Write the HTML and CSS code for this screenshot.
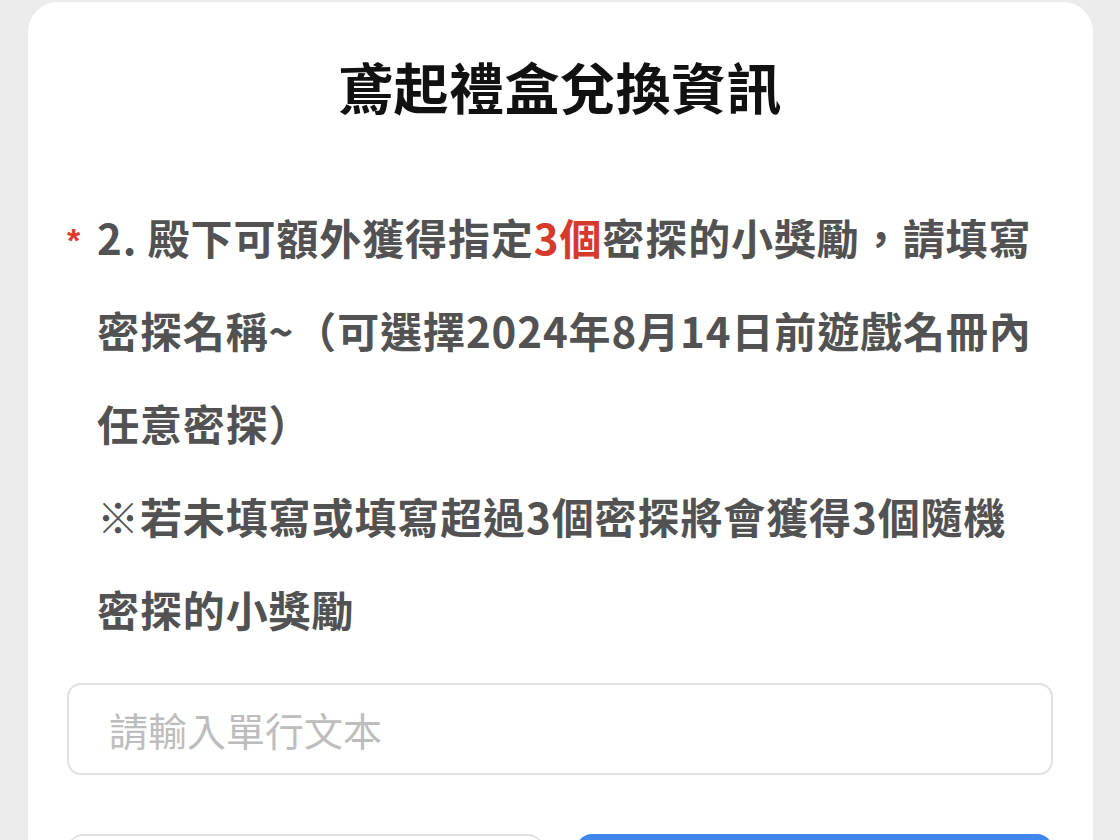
FILE: index.html
```html
<!DOCTYPE html>
<html lang="zh-Hant">
<head>
  <meta charset="UTF-8">
  <meta name="viewport" content="width=device-width, initial-scale=1.0">
  <title>鳶起禮盒兌換資訊</title>
  <link rel="stylesheet" href="styles.css">
</head>
<body>
  <div class="form-card">
    <h1 class="form-title">鳶起禮盒兌換資訊</h1>

    <div class="question">
      <span class="required">*</span>
      <div class="question-text">
        2. 殿下可額外獲得指定<span class="highlight">3個</span>密探的小獎勵，請填寫<br>
        密探名稱~（可選擇2024年8月14日前遊戲名冊內<br>
        任意密探）<br>
        ※若未填寫或填寫超過3個密探將會獲得3個隨機<br>
        密探的小獎勵
      </div>
    </div>

    <input class="text-input" type="text" placeholder="請輸入單行文本">

    <div class="actions">
      <button class="btn btn-prev">上一頁</button>
      <button class="btn btn-next">提交</button>
    </div>
  </div>
</body>
</html>
```

FILE: styles.css
```css
body {
  margin: 0;
  background-color: #ececec;
  font-family: "Noto Sans CJK TC", "Noto Sans", sans-serif;
}

.form-card {
  margin: 2px 27px 0 28px;
  padding: 45px 40px 60px 39px;
  background-color: #fff;
  border-radius: 30px;
}

.form-title {
  margin: 0;
  font-size: 55px;
  line-height: 76px;
  font-weight: 700;
  color: #111;
  text-align: center;
  letter-spacing: 0.5px;
}

.question {
  display: flex;
  margin-top: 67px;
}

.required {
  width: 30px;
  flex-shrink: 0;
  padding-top: 4px;
  font-family: "Liberation Sans", sans-serif;
  font-size: 34px;
  font-weight: 700;
  line-height: 93px;
  color: #e23b2e;
}

.question-text {
  flex: 1;
  font-size: 42px;
  line-height: 93px;
  font-weight: 700;
  color: #525252;
  letter-spacing: 0.9px;
  white-space: nowrap;
}

.highlight {
  color: #d63a2c;
}

.text-input {
  display: block;
  box-sizing: border-box;
  width: 100%;
  height: 92px;
  margin-top: 28px;
  padding: 0 40px;
  border: 2px solid #e2e2e2;
  border-radius: 14px;
  font-family: inherit;
  font-size: 39px;
  color: #333;
  outline: none;
}

.text-input::placeholder {
  color: #bdbdbd;
}

.actions {
  display: grid;
  grid-template-columns: 1fr 1fr;
  gap: 32px;
  margin-top: 59px;
}

.btn {
  height: 92px;
  border-radius: 16px;
  font-family: inherit;
  font-size: 38px;
}

.btn-prev {
  background-color: #fff;
  border: 2px solid #e2e2e2;
  color: #333;
}

.btn-next {
  background-color: #3f86ed;
  border: 2px solid #3f86ed;
  color: #fff;
}
```
